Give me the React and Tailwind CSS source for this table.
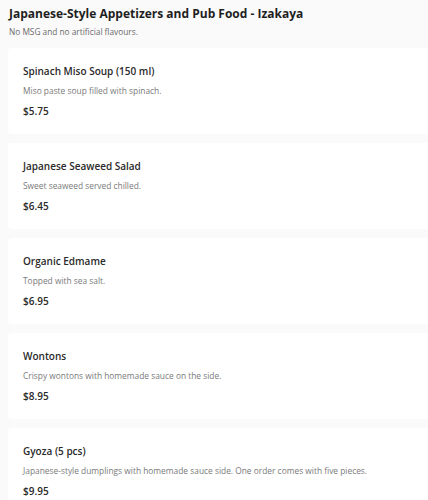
import React from 'react'

const items = [
  { name: 'Spinach Miso Soup (150 ml)', desc: 'Miso paste soup filled with spinach.', price: '$5.75' },
  { name: 'Japanese Seaweed Salad', desc: 'Sweet seaweed served chilled.', price: '$6.45' },
  { name: 'Organic Edmame', desc: 'Topped with sea salt.', price: '$6.95' },
  { name: 'Wontons', desc: 'Crispy wontons with homemade sauce on the side.', price: '$8.95' },
  { name: 'Gyoza (5 pcs)', desc: 'Japanese-style dumplings with homemade sauce side. One order comes with five pieces.', price: '$9.95' },
]

export default function App() {
  return (
    <div
      className="min-h-[500px] w-[428px] overflow-hidden bg-[#fafafa] pl-2"
      style={{ fontFamily: '"Open Sans", "Noto Sans", sans-serif' }}
    >
      {/* Section header */}
      <div className="pt-[5px] pl-px">
        <h2 className="text-[12px] font-bold leading-[18px] text-[#1f1f1f]">
          Japanese-Style Appetizers and Pub Food - Izakaya
        </h2>
        <p className="mt-[3px] text-[8.3px] leading-[12px] text-[#6b6b6b]">No MSG and no artificial flavours.</p>
      </div>

      {/* Items */}
      <div className="mt-[10px] flex flex-col gap-[9px] w-[440px]">
        {items.map((it) => (
          <div key={it.name} className="rounded-[4px] bg-white px-[15px] pt-[15px] pb-[15px]">
            <p className="text-[10px] font-semibold leading-[16px] text-[#2a2a2a]">{it.name}</p>
            <p className="mt-[5px] text-[8.4px] leading-[14px] text-[#7a7a7a]">{it.desc}</p>
            <p className="mt-[5px] text-[10px] font-semibold leading-[16px] text-[#2a2a2a]">{it.price}</p>
          </div>
        ))}
      </div>
    </div>
  )
}
